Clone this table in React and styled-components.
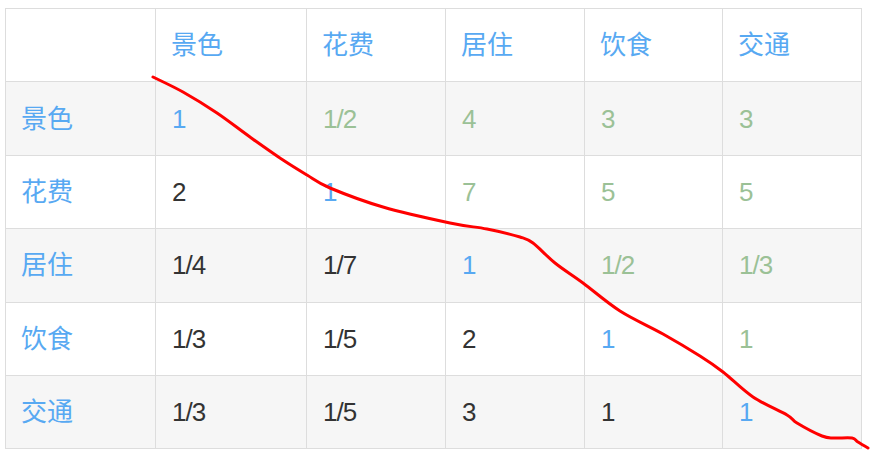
import React from "react";
import styled, { createGlobalStyle } from "styled-components";

const Global = createGlobalStyle`
  html, body { margin: 0; padding: 0; background: #fff; }
  body { font-family: "Liberation Sans", "Noto Sans CJK SC", sans-serif; }
`;

const Page = styled.div`
  position: relative;
  width: 871px;
  height: 457px;
  padding: 8px 0 0 5px;
  box-sizing: border-box;
`;

const Table = styled.table`
  border-collapse: collapse;
  table-layout: fixed;
  width: 857px;
  font-size: 26px;
`;

const Row = styled.tr`
  height: 73.4px;
  background: ${(p) => (p.$striped ? "#f6f6f6" : "#fff")};
`;

const Cell = styled.td`
  border: 1px solid #dddddd;
  padding: 0 0 0 ${(p) => (p.$cjk ? "15px" : "16px")};
  vertical-align: middle;
  line-height: 30px;
  letter-spacing: ${(p) => (p.$cjk ? "0" : "-1px")};
  color: ${(p) =>
    p.$tone === "blue" ? "#58a9f2" : p.$tone === "green" ? "#9bc196" : "#333333"};
`;

const Overlay = styled.svg`
  position: absolute;
  left: 0;
  top: 0;
  pointer-events: none;
`;

const headers = ["景色", "花费", "居住", "饮食", "交通"];
const data = [
  ["1", "1/2", "4", "3", "3"],
  ["2", "1", "7", "5", "5"],
  ["1/4", "1/7", "1", "1/2", "1/3"],
  ["1/3", "1/5", "2", "1", "1"],
  ["1/3", "1/5", "3", "1", "1"],
];
const widths = [150, 151, 139, 139, 138, 139];

const pts = [
  [153, 77], [183, 92], [217, 113], [250, 137], [283, 160], [307, 175],
  [330, 188], [383, 207], [450, 223], [487, 229], [520, 237], [533, 243],
  [555, 263], [583, 283], [620, 311], [663, 334], [700, 356], [723, 372],
  [753, 397], [787, 415], [797, 423], [822, 436], [834, 438], [852, 438],
  [858, 442], [868, 448],
];

function smoothPath(p) {
  let d = `M${p[0][0]} ${p[0][1]}`;
  for (let i = 0; i < p.length - 1; i++) {
    const p0 = p[i - 1] || p[i];
    const p1 = p[i];
    const p2 = p[i + 1];
    const p3 = p[i + 2] || p2;
    const c1x = p1[0] + (p2[0] - p0[0]) / 6;
    const c1y = p1[1] + (p2[1] - p0[1]) / 6;
    const c2x = p2[0] - (p3[0] - p1[0]) / 6;
    const c2y = p2[1] - (p3[1] - p1[1]) / 6;
    d += ` C${c1x.toFixed(1)} ${c1y.toFixed(1)}, ${c2x.toFixed(1)} ${c2y.toFixed(1)}, ${p2[0]} ${p2[1]}`;
  }
  return d;
}

function tone(r, c) {
  if (r === c) return "blue";
  if (c > r) return "green";
  return "dark";
}

export default function App() {
  return (
    <>
      <Global />
      <Page>
        <Table>
          <colgroup>
            {widths.map((w, i) => (
              <col key={i} style={{ width: w }} />
            ))}
          </colgroup>
          <tbody>
            <Row>
              <Cell />
              {headers.map((h) => (
                <Cell key={h} $tone="blue" $cjk>{h}</Cell>
              ))}
            </Row>
            {data.map((row, r) => (
              <Row key={r} $striped={r % 2 === 0}>
                <Cell $tone="blue" $cjk>{headers[r]}</Cell>
                {row.map((v, c) => (
                  <Cell key={c} $tone={tone(r, c)}>{v}</Cell>
                ))}
              </Row>
            ))}
          </tbody>
        </Table>
        <Overlay width="871" height="457" viewBox="0 0 871 457">
          <path
            d={smoothPath(pts)}
            fill="none"
            stroke="#ff0000"
            strokeWidth="3"
            strokeLinecap="round"
            strokeLinejoin="round"
          />
        </Overlay>
      </Page>
    </>
  );
}
